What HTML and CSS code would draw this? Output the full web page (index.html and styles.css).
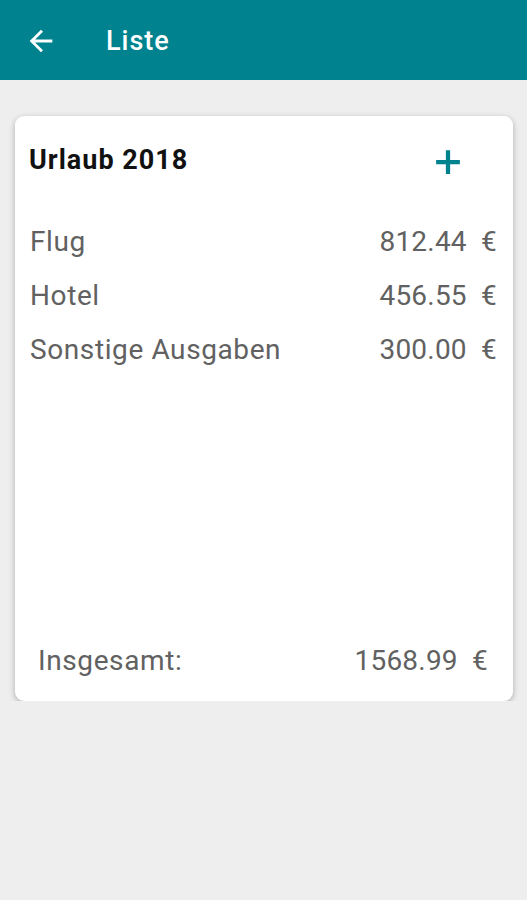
FILE: index.html
```html
<!DOCTYPE html>
<html lang="de">
<head>
    <meta charset="UTF-8">
    <meta name="viewport" content="width=device-width, initial-scale=1.0" />
    <title>Liste</title>
    <link rel="stylesheet" href="styles.css">
</head>
<body>

    <!-- App bar -->
    <div class="toolbar">
        <svg class="back" width="34" height="34" viewBox="0 0 24 24">
            <path d="M20 11H7.83l5.59-5.59L12 4l-8 8 8 8 1.41-1.41L7.83 13H20v-2z" fill="#fff"/>
        </svg>
        <span class="title">Liste</span>
    </div>

    <div class="content">
        <div class="card">
            <div class="card-head">
                <h2>Urlaub 2018</h2>
                <svg class="add" width="30" height="30" viewBox="0 0 24 24">
                    <path d="M10.3 2.5h3.4v7.8h7.8v3.4h-7.8v7.8h-3.4v-7.8H2.5v-3.4h7.8z" fill="#00838f"/>
                </svg>
            </div>

            <div class="rows">
                <div class="row"><span>Flug</span><span class="amount">812.44 &nbsp;€</span></div>
                <div class="row"><span>Hotel</span><span class="amount">456.55 &nbsp;€</span></div>
                <div class="row"><span>Sonstige Ausgaben</span><span class="amount">300.00 &nbsp;€</span></div>
            </div>

            <div class="total">
                <span>Insgesamt:</span>
                <span class="amount">1568.99 &nbsp;€</span>
            </div>
        </div>
    </div>

</body>
</html>
```

FILE: styles.css
```css
body {
    margin: 0;
    font-family: Roboto, "Noto Sans", sans-serif;
    background: #eeeeee;
}
.toolbar {
    height: 80px;
    background: #00838f;
    display: flex;
    align-items: center;
    padding: 0 0 0 24px;
    box-sizing: border-box;
}
.toolbar .back {
    margin-top: 2px;
}
.toolbar .title {
    color: #fff;
    font-size: 27px;
    font-weight: 500;
    letter-spacing: 1px;
    margin-left: 48px;
    margin-top: 2px;
}
.content {
    padding: 36px 14px 0 15px;
}
.card {
    background: #fff;
    border-radius: 9px;
    height: 585px;
    box-sizing: border-box;
    box-shadow: 0 2px 6px rgba(0,0,0,0.28);
    display: flex;
    flex-direction: column;
    padding: 0 16px 0 14px;
}
.card-head {
    display: flex;
    justify-content: space-between;
    align-items: flex-start;
    height: 99px;
}
.card-head h2 {
    margin: 28px 0 0 0;
    font-size: 27px;
    font-weight: 700;
    letter-spacing: 1px;
    color: #111;
}
.card-head .add {
    margin: 31px 34px 0 0;
}
.rows {
    flex: 1;
}
.row, .total {
    display: flex;
    justify-content: space-between;
    font-size: 28px;
    color: #616161;
    height: 54px;
    line-height: 54px;
    letter-spacing: 0.6px;
}
.row .amount, .total .amount {
    letter-spacing: 0.2px;
}
.row span:first-child {
    padding-left: 1px;
}
.total {
    padding: 0 9px;
    height: 56px;
    line-height: 56px;
    margin-bottom: 12px;
}
```
